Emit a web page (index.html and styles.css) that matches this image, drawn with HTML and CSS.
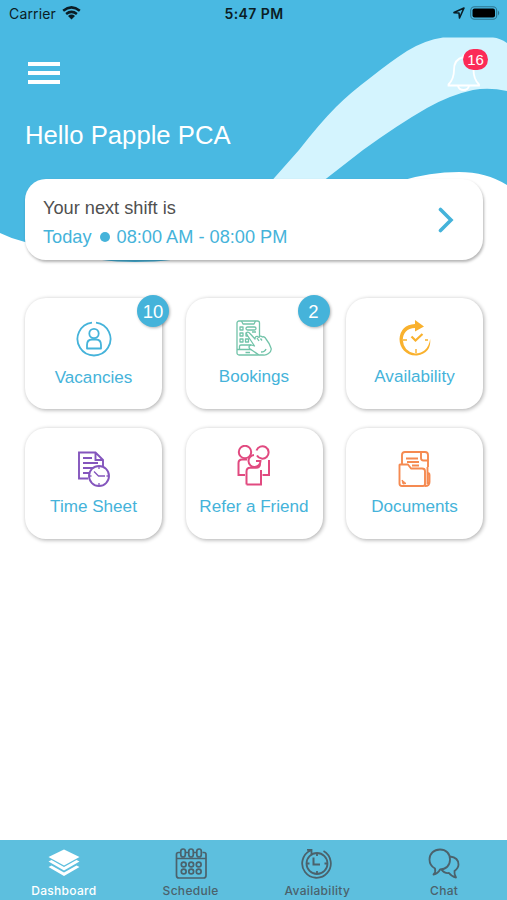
FILE: index.html
```html
<!DOCTYPE html>
<html lang="en">
	<head>
		<meta charset="utf-8">
		<meta name="viewport" content="width=device-width, initial-scale=1"/>
		<link rel="stylesheet" href="styles.css">
		<title>Dashboard</title>
	</head>
	<body>
		<div class="app">
			<svg class="waves" viewBox="0 0 507 280">
				<path fill="#49b9e2" d="M0 0H507V185Q486 172 459 172Q430 172 400 181C330 204 250 262 135 262C95 262 55 253 25 242Q12 239 0 233Z"/>
				<path fill="#d4f4fe" d="M268 185L299 150Q320 123 336 107Q350 93 370 78Q390 62 407 51Q425 40 443 37.500H493Q500 38 507 43V91Q489 87 473 90Q450 95 427 108Q399 124 363 150L318 185Z"/>
			</svg>

			<div class="status">
				<div class="carrier">Carrier
					<svg width="19" height="14" viewBox="0 0 19 14" fill="none" stroke="#0b1d25" stroke-width="2.500"><path d="M1.200 4.800Q9.500 -2 17.800 4.800M4.100 8Q9.500 3.700 14.900 8"/><path fill="#0b1d25" stroke="none" d="M6 10Q9.500 7.200 13 10L9.500 13.600Z"/></svg>
				</div>
				<div class="time">5:47 PM</div>
				<div class="power">
					<svg width="12" height="12" viewBox="0 0 12 12" fill="none" stroke="#0b1d25" stroke-width="1.600" stroke-linejoin="round"><path d="M1 5.600L11 1L6.500 11L6 6Z"/></svg>
					<svg width="30" height="14" viewBox="0 0 30 14"><rect x=".7" y=".7" width="26" height="12.600" rx="3.800" fill="none" stroke="#2d7590" stroke-width="1.100"/><rect x="2.500" y="2.500" width="22.500" height="9" rx="2" fill="#000"/><path d="M28 4.500Q30.500 7 28 9.500Z" fill="#2d7590"/></svg>
				</div>
			</div>

			<div class="topbar">
				<div class="menu"><span></span><span></span><span></span></div>
				<div class="bell">
					<svg width="34" height="38" viewBox="0 0 34 38" fill="none" stroke="#fff" stroke-width="1.800"><path d="M16.500 1.500V4Q7 6 7 17Q7 26 1.500 31.500V32.500H32V31.500Q26.500 26 26.500 17Q26 6 16.500 4M11 33Q12 37 16.500 37T22 33"/></svg>
					<span class="alert">16</span>
				</div>
			</div>
			<div class="hello">Hello Papple PCA</div>

			<div class="shift">
				<div>
					<div class="next">Your next shift is</div>
					<div class="when">Today<i class="dot"></i>08:00 AM - 08:00 PM</div>
				</div>
				<svg width="16" height="26" viewBox="0 0 16 26" fill="none" stroke="#45b3da" stroke-width="3.600" stroke-linecap="round"><path d="M2.500 2.500L13 13L2.500 23.500"/></svg>
			</div>

			<div class="tiles">
				<div class="tile vacancies">
					<svg width="36" height="38" viewBox="0 0 36 38" fill="none" stroke="#45b3da" stroke-width="1.800"><path d="M16 2.600A16.500 16.500 0 1 0 20 2.600"/><circle cx="18" cy="13.500" r="4.700"/><path d="M11 28.500V25Q11 19.500 16 19.500H20Q25 19.500 25 25V28.500Z" stroke-linejoin="round"/></svg>
					<span>Vacancies</span>
					<b class="count">10</b>
				</div>
				<div class="tile">
					<svg width="36" height="38" viewBox="0 0 36 38" fill="none" stroke="#72c3a9" stroke-width="1.300" stroke-linejoin="round"><rect x="1" y="2" width="22.500" height="34" rx="2"/><path d="M5.500 2L7 5H18L19.500 2M1 30.500H20M9.500 33.500H14M3.500 30V27.500Q3.500 26 5 26H15"/><rect x="4" y="8" width="3" height="3"/><rect x="4" y="14" width="3" height="3"/><rect x="4" y="20" width="3" height="3"/><rect x="10" y="8" width="10" height="3" rx="1.500"/><path d="M10 14H12V17H10ZM16 13H20M9.500 20H12.500V23H9.500Z"/><path fill="#fff" d="M11.500 16.500Q9.500 14 11 13.300Q12.500 12.700 14 14.500L19 20Q19 17 21.500 17.500L23 18.500Q24 16 26.500 18Q28.500 17 30 20Q34 25 35 29Q36 32 32.500 34.500Q30 36.500 27 36H23Q20 34 13.500 29.500Q12 26.500 15.500 26L18.500 27Z"/><path d="M21 19L23 22M24.500 19.500L26 21.500M25 33Q29 33 30 30"/></svg>
					<span>Bookings</span>
					<b class="count">2</b>
				</div>
				<div class="tile">
					<svg width="36" height="38" viewBox="0 0 36 38" fill="none" stroke="#f9b12d"><path stroke="none" fill="#f9b12d" d="M18 1L27 7.500L18 12.500V9C10 9 6 14 5.800 21Q6.500 32.500 18 34.500Q31 34 33.200 20Q34.500 34 20 36.500C9 37 2.500 29 2.500 20Q3.500 6 18 5Z"/><path stroke-width="2.200" d="M14.500 17.500L18.500 21.500L25.500 15"/><path stroke-width="1.400" d="M6 21H10M28 21H31M19 30V34"/></svg>
					<span>Availability</span>
				</div>
				<div class="tile">
					<svg width="36" height="38" viewBox="0 0 36 38" fill="none" stroke="#8455bd" stroke-width="1.900"><path d="M12 29.500H3V3.500H19.500L27 11V18M19.500 3.500V11H27M7 9H16M7 14H22M7 19H17M7 24H13"/><circle cx="23" cy="27" r="10" fill="#fff"/><path stroke-width="1.300" d="M18 22.500L22.500 27H29M23 17.500V20M23 34V37M13 27H15.500M30.500 27H33"/></svg>
					<span>Time Sheet</span>
				</div>
				<div class="tile">
					<svg class="people" width="36" height="42" viewBox="0 0 36 42" fill="none" stroke="#e14a80" stroke-width="2"><circle cx="9" cy="7" r="6.200"/><path d="M20.500 5.500A6.200 6.200 0 1 1 21 10.500M9 30H2.500V18Q2.500 14.500 6 14.500H11M33 15V30H26.500M18 10A6 6 0 1 0 24.500 16H20M10.500 39.500V26.500Q10.500 22.800 14 22.800H20Q24 22.800 24 19M25 25V39.500H10.500"/></svg>
					<span>Refer a Friend</span>
				</div>
				<div class="tile">
					<svg width="36" height="38" viewBox="0 0 36 38" fill="none" stroke="#f58a51" stroke-width="1.900" stroke-linejoin="round"><path d="M5 15V6Q5 3 8 3H28Q31 3 31 6V18M24 3V9Q24 11.500 26.500 11.500H31M9 9.500H21M10 13H22M15 16.500H22"/><path d="M3 15.500H11L14 19.500H25Q28 19.500 28 22V35Q28 37 26 37H5Q2.500 37 2.500 34.500V16ZM28 37Q32.500 37 32.500 33V26Q32.500 24 30.500 24M30.500 18V35"/><path fill="#f58a51" stroke-width="1" d="M5 31L9 34.500L6 35Z"/></svg>
					<span>Documents</span>
				</div>
			</div>

			<div class="tabs">
				<div class="tab active">
					<svg width="34" height="32" viewBox="0 0 34 32" fill="#fff"><path d="M17 1.500L32.500 9L17 17.500L1.500 9Z"/><path d="M1.500 13.500L4.500 12L17 19L29.500 12L32.500 13.500L17 22.500ZM1.500 19L4.500 17.500L17 24.500L29.500 17.500L32.500 19L17 28Z"/></svg>
					Dashboard
				</div>
				<div class="tab">
					<svg width="34" height="32" viewBox="0 0 34 32" fill="none" stroke="#4b626c" stroke-width="1.700"><path d="M6 4.500H4.500Q2.500 4.500 2.500 6.500V27.500Q2.500 30 5 30H29.500Q32 30 32 27.500V6.500Q32 4.500 30 4.500H28.500M2.500 10.500H32"/><rect x="6.800" y="1" width="4.500" height="8" rx="2.250"/><rect x="14.800" y="1" width="4.500" height="8" rx="2.250"/><rect x="22.800" y="1" width="4.500" height="8" rx="2.250"/><path d="M11.300 4.500H14.800M19.300 4.500H22.800"/><circle cx="9.700" cy="16.500" r="2.400"/><circle cx="17.200" cy="16.500" r="2.400"/><circle cx="24.700" cy="16.500" r="2.400"/><circle cx="9.700" cy="23.500" r="2.400"/><circle cx="17.200" cy="23.500" r="2.400"/><circle cx="24.700" cy="23.500" r="2.400"/></svg>
					Schedule
				</div>
				<div class="tab">
					<svg width="34" height="32" viewBox="0 0 34 32" fill="none" stroke="#4b626c" stroke-width="1.800"><path d="M10.500 2.500A14.300 14.300 0 1 0 23.500 3M7 1.800H11.500V6"/><circle cx="17" cy="15.500" r="10.500"/><path stroke-width="2" d="M13.500 9.500V16.500H20"/><path d="M17 5V8M17 23V26M6.500 15.500H9.500M24.500 15.500H27.500"/></svg>
					Availability
				</div>
				<div class="tab">
					<svg width="34" height="32" viewBox="0 0 34 32" fill="none" stroke="#4b626c" stroke-width="1.800" stroke-linejoin="round"><path d="M8 20.500Q2.500 17.500 2.500 11.500C2.500 5.500 7 1.500 13 1.500S23 5.500 23 11.500S19 21.500 13 21.500Q11 25.500 6.500 26.500Q9 24 8 20.500Z"/><path d="M23 8.500Q31.500 9.500 31.500 16.500Q31.500 20 27.500 23Q27 26 29 29.500Q24.500 28.500 22 25Q17 25.500 14.500 21.500"/></svg>
					Chat
				</div>
			</div>
		</div>
	</body>
</html>
```

FILE: styles.css
```css
*{box-sizing:border-box;}
body{margin:0;background:#fff;font-family:"Liberation Sans",Arial,sans-serif;}
svg{display:block;flex:none;}
.app{
	position:relative;
	display:flex;
	flex-direction:column;
	height:900px;
	overflow:hidden;
}
.waves{position:absolute;top:0;left:0;width:507px;height:280px;z-index:-1;}

.status{
	display:grid;
	grid-template-columns:1fr auto 1fr;
	align-items:center;
	height:28px;
	padding:0 7px 0 9px;
	font:14px Inter,sans-serif;
	color:#0b1d25;
}
.carrier{display:flex;align-items:center;gap:6px;letter-spacing:.15px;margin-top:-2px;}
.time{margin:-1px 1px 0 0;font-weight:600;letter-spacing:.4px;}
.power{display:flex;align-items:center;justify-content:flex-end;gap:5px;margin-top:-2px;}

.topbar{
	display:flex;
	justify-content:space-between;
	align-items:flex-start;
	height:92px;
	padding:34px 25px 0 28px;
}
.menu{display:flex;flex-direction:column;gap:5px;width:32px;}
.menu span{height:4px;background:#fff;}
.bell{position:relative;width:34px;margin:-9px 1px 0 0;}
.alert{
	position:absolute;
	left:16px;
	top:-4px;
	width:25px;
	height:21px;
	border-radius:11px;
	background:#fb2b57;
	color:#fff;
	font-size:15px;
	line-height:21px;
	text-align:center;
}
.hello{height:59px;padding-left:25px;font-size:25.700px;line-height:31px;color:#fff;}

.shift{
	display:flex;
	justify-content:space-between;
	align-items:center;
	width:458px;
	height:81px;
	margin-left:25px;
	padding:0 29px 0 18px;
	border-radius:21px;
	background:#fff;
	box-shadow:1px 2px 3px rgba(0,0,0,.3);
	font-size:18.200px;
}
.next{padding-top:6px;line-height:29px;color:#505050;}
.when{display:flex;align-items:center;line-height:29px;color:#45b3da;}
.dot{width:10px;height:10px;margin:0 7px 0 8px;border-radius:50%;background:#45b3da;}

.tiles{
	display:grid;
	grid-template-columns:repeat(3,137px);
	grid-auto-rows:111px;
	gap:18.500px 23.500px;
	margin:38px 0 0 25px;
}
.tile{
	position:relative;
	display:flex;
	flex-direction:column;
	align-items:center;
	padding-top:21px;
	border-radius:21px;
	background:#fff;
	box-shadow:1px 1px 4px rgba(0,0,0,.33);
	font-size:17.100px;
	color:#45b3da;
}
.tile span{margin-top:9px;line-height:22px;white-space:nowrap;}
.vacancies{padding-top:22px;}
.people{margin:-4px 0 0;}
.count{
	position:absolute;
	top:-3px;
	right:-7px;
	width:32px;
	height:32px;
	border-radius:50%;
	background:#45b3da;
	box-shadow:1px 1px 3px rgba(0,0,0,.3);
	color:#fff;
	font-size:18.500px;
	font-weight:normal;
	line-height:33px;
	text-align:center;
}

.tabs{
	display:flex;
	height:60px;
	margin-top:auto;
	background:#5dbfde;
}
.tab{
	flex:1;
	display:flex;
	flex-direction:column;
	align-items:center;
	gap:3px;
	padding:8px 0 0 1px;
	font:500 12px/16px Inter,sans-serif;
	letter-spacing:.3px;
	color:#4b626c;
}
.active{color:#fff;}
```
